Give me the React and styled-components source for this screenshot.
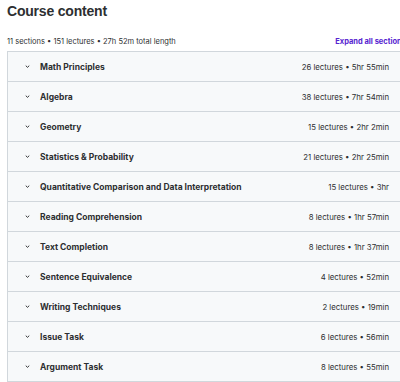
import styled, { createGlobalStyle } from 'styled-components'

const Global = createGlobalStyle`
  body {
    margin: 0;
    background: #ffffff;
    font-family: Inter, "Liberation Sans", sans-serif;
    color: #2d2f31;
    overflow: hidden;
  }
`;

const Page = styled.div`
  width: 399px;
  margin-left: 7px;
`;

const Title = styled.h2`
  font-family: "Liberation Sans", Arial, sans-serif;
  font-size: 14px;
  font-weight: 700;
  letter-spacing: -0.2px;
  margin: 0;
  line-height: 22px;
`;

const Summary = styled.div`
  display: flex;
  justify-content: space-between;
  align-items: center;
  margin-top: 10px;
  height: 19px;
  font-size: 7.5px;
`;

const Meta = styled.span`
  color: #2d2f31;
`;

const Expand = styled.span`
  color: #5624d0;
  font-weight: 700;
  white-space: nowrap;
`;

const List = styled.div`
  border: 1px solid #d1d7dc;
`;

const Row = styled.div`
  display: flex;
  align-items: center;
  height: 29px;
  padding: 0 16px;
  background: #f7f9fa;
  border-top: ${(p) => (p.first ? 'none' : '1px solid #d1d7dc')};
`;

const Chevron = styled.svg`
  width: 7px;
  height: 7px;
  margin-right: 9px;
  flex-shrink: 0;
`;

const Name = styled.span`
  flex: 1;
  font-size: 8.5px;
  font-weight: 700;
`;

const Info = styled.span`
  font-size: 7.8px;
  color: #2d2f31;
  white-space: nowrap;
`;

const sections = [
  ['Math Principles', '26 lectures • 5hr 55min'],
  ['Algebra', '38 lectures • 7hr 54min'],
  ['Geometry', '15 lectures • 2hr 2min'],
  ['Statistics & Probability', '21 lectures • 2hr 25min'],
  ['Quantitative Comparison and Data Interpretation', '15 lectures • 3hr'],
  ['Reading Comprehension', '8 lectures • 1hr 57min'],
  ['Text Completion', '8 lectures • 1hr 37min'],
  ['Sentence Equivalence', '4 lectures • 52min'],
  ['Writing Techniques', '2 lectures • 19min'],
  ['Issue Task', '6 lectures • 56min'],
  ['Argument Task', '8 lectures • 55min'],
];

export default function App() {
  return (
    <Page>
      <Global />
      <Title>Course content</Title>
      <Summary>
        <Meta>11 sections • 151 lectures • 27h 52m total length</Meta>
        <Expand>Expand all sections</Expand>
      </Summary>
      <List>
        {sections.map(([name, info], i) => (
          <Row key={name} first={i === 0}>
            <Chevron viewBox="0 0 10 10">
              <path d="M2.5 3.8 L5 6.2 L7.5 3.8" fill="none" stroke="#2d2f31" strokeWidth="1.4" />
            </Chevron>
            <Name>{name}</Name>
            <Info>{info}</Info>
          </Row>
        ))}
      </List>
    </Page>
  );
}
